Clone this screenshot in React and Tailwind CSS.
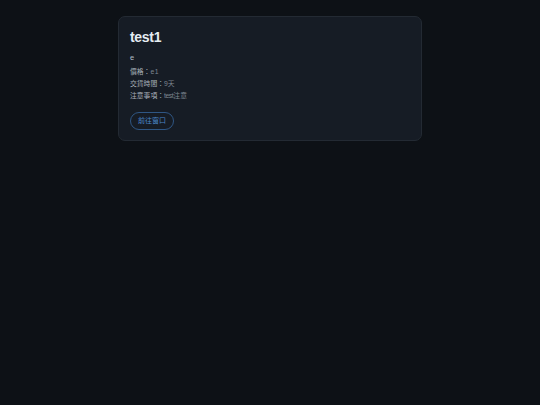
export default function App() {
  const colon = "\uFF1A";
  return (
    <div className="min-h-[405px] bg-[#0d1116] font-['Liberation_Sans','Noto_Sans_CJK_TC',sans-serif] pt-4">
      <div className="mx-auto w-[304px] h-[125px] rounded-[7px] border border-[#232a33] bg-[#161c25] px-[11px] pt-[11px]">
        <h1 className="text-[14px] leading-[18px] font-bold tracking-[-0.3px] text-[#e6edf3]">test1</h1>
        <p className="mt-[6px] text-[7.5px] leading-[12px] text-[#b4bcc5]">e</p>
        <div className="mt-[2px] flex flex-col text-[6.8px] leading-[12px] text-[#7d8590]">
          <p className="text-[#a9b1ba]">價格{colon}<span className="text-[#7d8590] tracking-[0.5px]">e1</span></p>
          <p className="text-[#a9b1ba]">交貨時間{colon}<span className="text-[#7d8590]">9天</span></p>
          <p className="text-[#a9b1ba]">注意事項{colon}<span className="text-[#7d8590]"><span className="tracking-[-0.4px]">test</span>注意</span></p>
        </div>
        <button className="mt-[10px] flex h-[18px] w-[44px] items-center justify-center rounded-full border border-[#2f5684] text-[7px] text-[#4a86c8]">前往窗口</button>
      </div>
    </div>
  );
}
